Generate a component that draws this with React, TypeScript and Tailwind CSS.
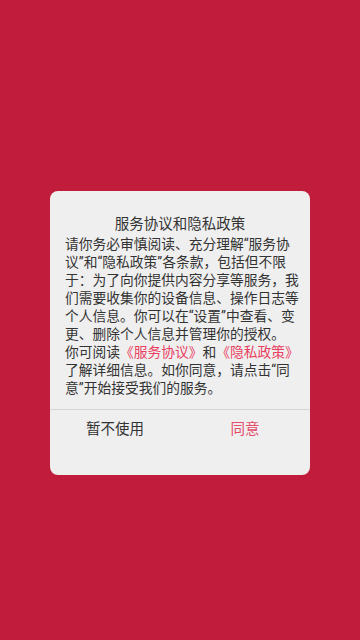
const lines: { text: string; links?: boolean }[] = [
  { text: '请你务必审慎阅读、充分理解“服务协' },
  { text: '议”和“隐私政策”各条款，包括但不限' },
  { text: '于：为了向你提供内容分享等服务，我' },
  { text: '们需要收集你的设备信息、操作日志等' },
  { text: '个人信息。你可以在“设置”中查看、变' },
  { text: '更、删除个人信息并管理你的授权。' },
  { text: '', links: true },
  { text: '了解详细信息。如你同意，请点击“同' },
  { text: '意”开始接受我们的服务。' },
];

export default function App() {
  const font = { fontFamily: 'Roboto, "Noto Sans CJK SC", sans-serif' };
  return (
    <div className="w-[360px] h-[640px] bg-[#c21c3c] flex items-start justify-center" style={font}>
      <div className="mt-[191px] w-[260px] bg-[#efefef] rounded-[8px] overflow-hidden">
        <div className="pt-[24px] text-center text-[14.5px] leading-[20px] text-[#333]">服务协议和隐私政策</div>
        <div className="px-[15px] text-[13.75px] leading-[18px] text-[#333]">
          {lines.map((l, i) =>
            l.links ? (
              <div key={i} className="whitespace-nowrap">
                你可阅读<span className="text-[#e8405e]">《服务协议》</span>和<span className="text-[#e8405e]">《隐私政策》</span>
              </div>
            ) : (
              <div key={i} className="whitespace-nowrap">{l.text}</div>
            )
          )}
        </div>
        <div className="mt-[12px] border-t border-[#d6d6d6] flex h-[66px]">
          <button className="flex-1 self-start pt-[11px] text-[14.5px] leading-[18px] text-[#333]">暂不使用</button>
          <button className="flex-1 self-start pt-[11px] text-[14.5px] leading-[18px] text-[#e34d68]">同意</button>
        </div>
      </div>
    </div>
  );
}
